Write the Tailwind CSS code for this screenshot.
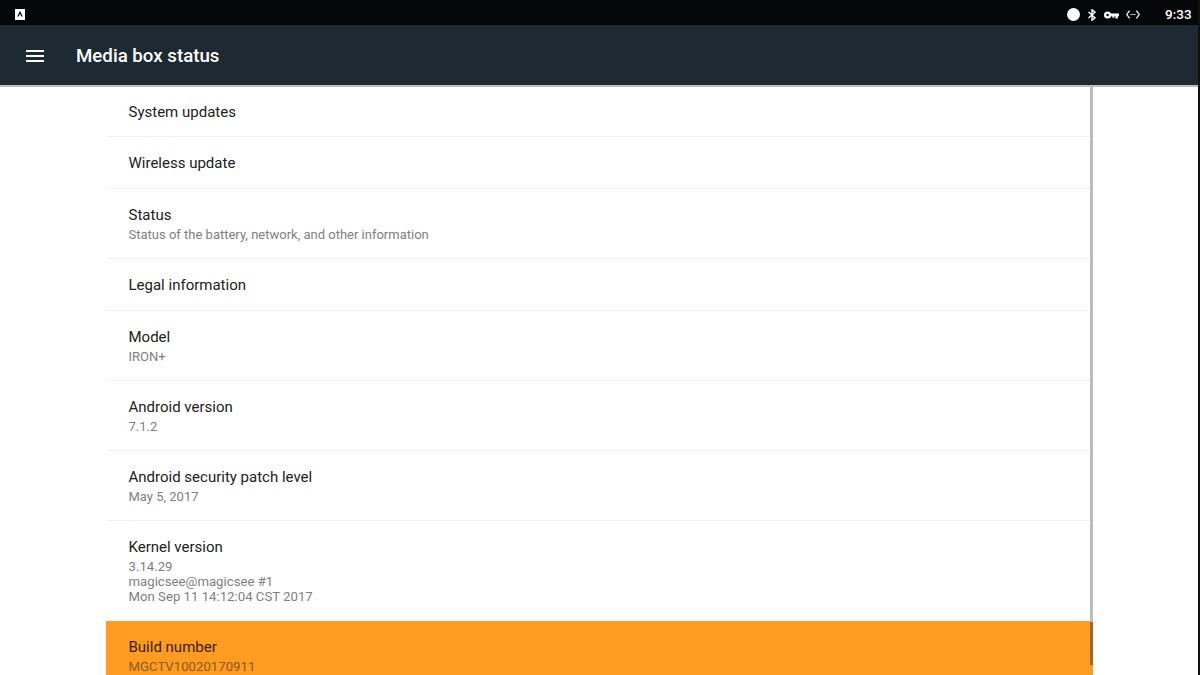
<!DOCTYPE html>
<html>
<head>
<meta charset="utf-8">
<script src="https://cdn.jsdelivr.net/npm/@tailwindcss/browser@4"></script>
</head>
<body class="bg-white">
<div class="w-[1200px] h-[675px] overflow-hidden flex flex-col bg-white font-['Roboto',sans-serif] border-r-2 border-[#111]">
  <div class="h-[25px] shrink-0 bg-[#050607] flex items-center pt-1 pl-[15px] pr-[7px] text-white">
    <div class="w-[10px] h-[11px] bg-white flex items-center justify-center">
      <svg viewBox="0 0 10 11" class="w-[10px] h-[11px]"><path d="M2.2 7.6 L5 1.8 L7.8 7.6 H6.3 L5 4.8 L3.7 7.6Z" fill="#111"/></svg>
    </div>
    <div class="flex-1"></div>
    <div class="w-[13px] h-[13px] rounded-full bg-white"></div>
    <svg viewBox="0 0 8 12" class="w-[8px] h-[12px] ml-[8px]" fill="none" stroke="#fff" stroke-width="1.4"><path d="M0.5 3 L7 8.8 L4 11.2 V0.8 L7 3.2 L0.5 9"/></svg>
    <svg viewBox="0 0 15 8" class="w-[15px] h-[8px] ml-[8px]" fill="none"><circle cx="3.6" cy="4" r="2.4" stroke="#fff" stroke-width="2.4"/><path d="M6 2.6 H15 V5.2 H13.8 V7.4 H11.4 V5.2 H10.4 V6.8 H8.4 V5.2 H6Z" fill="#fff"/></svg>
    <svg viewBox="0 0 14 9" class="w-[14px] h-[9px] ml-[7px]" fill="none" stroke="#fff" stroke-width="1.2"><path d="M3.6 0.6 L0.8 4.5 L3.6 8.4M10.4 0.6 L13.2 4.5 L10.4 8.4"/><path d="M4.6 4.5 H5.8M6.4 4.5 H7.6M8.2 4.5 H9.4"/></svg>
    <span class="ml-[25px] text-[13.5px] leading-none font-medium w-[26px]">9:33</span>
  </div>
  <div class="h-[60px] shrink-0 bg-[#1e2a32] flex items-center pl-[26px] pt-[2px]">
    <svg viewBox="0 0 18 12" class="w-[18px] h-[12px]" fill="#fff"><rect y="0" width="18" height="2"/><rect y="5" width="18" height="2"/><rect y="10" width="18" height="2"/></svg>
    <span class="ml-[32px] text-[18.7px] font-medium text-white leading-none">Media box status</span>
  </div>
  <div class="h-[2px] shrink-0 bg-[#b9bdc0]"></div>
  <div class="relative flex-1 pl-[106px] pr-[105px] overflow-hidden">
    <div class="flex flex-col text-[#212121]">
      <div class="h-[50px] border-b border-[#f1f1f1] pl-[22.5px] pt-[15px]"><p class="text-[15px] leading-[20px]">System updates</p></div>
      <div class="h-[52px] border-b border-[#f1f1f1] pl-[22.5px] pt-[16px]"><p class="text-[15px] leading-[20px]">Wireless update</p></div>
      <div class="h-[70px] border-b border-[#f1f1f1] pl-[22.5px] pt-[16px]"><p class="text-[15px] leading-[20px]">Status</p><p class="text-[13px] leading-[20px] text-[#808080]">Status of the battery, network, and other information</p></div>
      <div class="h-[52px] border-b border-[#f1f1f1] pl-[22.5px] pt-[16px]"><p class="text-[15px] leading-[20px]">Legal information</p></div>
      <div class="h-[70px] border-b border-[#f1f1f1] pl-[22.5px] pt-[16px]"><p class="text-[15px] leading-[20px]">Model</p><p class="text-[13px] leading-[20px] text-[#808080]">IRON+</p></div>
      <div class="h-[70px] border-b border-[#f1f1f1] pl-[22.5px] pt-[16px]"><p class="text-[15px] leading-[20px]">Android version</p><p class="text-[13px] leading-[20px] text-[#808080]">7.1.2</p></div>
      <div class="h-[70px] border-b border-[#f1f1f1] pl-[22.5px] pt-[16px]"><p class="text-[15px] leading-[20px]">Android security patch level</p><p class="text-[13px] leading-[20px] text-[#808080]">May 5, 2017</p></div>
      <div class="h-[100px] pl-[22.5px] pt-[16px]"><p class="text-[15px] leading-[20px]">Kernel version</p><div class="text-[13.2px] leading-[15px] text-[#808080] pt-[2px]"><p>3.14.29</p><p>magicsee@magicsee #1</p><p>Mon Sep 11 14:12:04 CST 2017</p></div></div>
      <div class="h-[70px] bg-[#fd9c20] pl-[22.5px] pt-[16px] text-[#3a1c00]"><p class="text-[15px] leading-[20px]">Build number</p><p class="text-[13.2px] leading-[20px] text-[#8a5a1c]">MGCTV10020170911</p></div>
    </div>
    <div class="absolute left-[1090px] top-0 w-[3px] h-[535px] bg-[#bcbcbc]"></div>
    <div class="absolute left-[1090px] top-[535px] w-[3px] h-[43px] bg-[#a8661a]"></div>
  </div>
</div>
</body>
</html>
